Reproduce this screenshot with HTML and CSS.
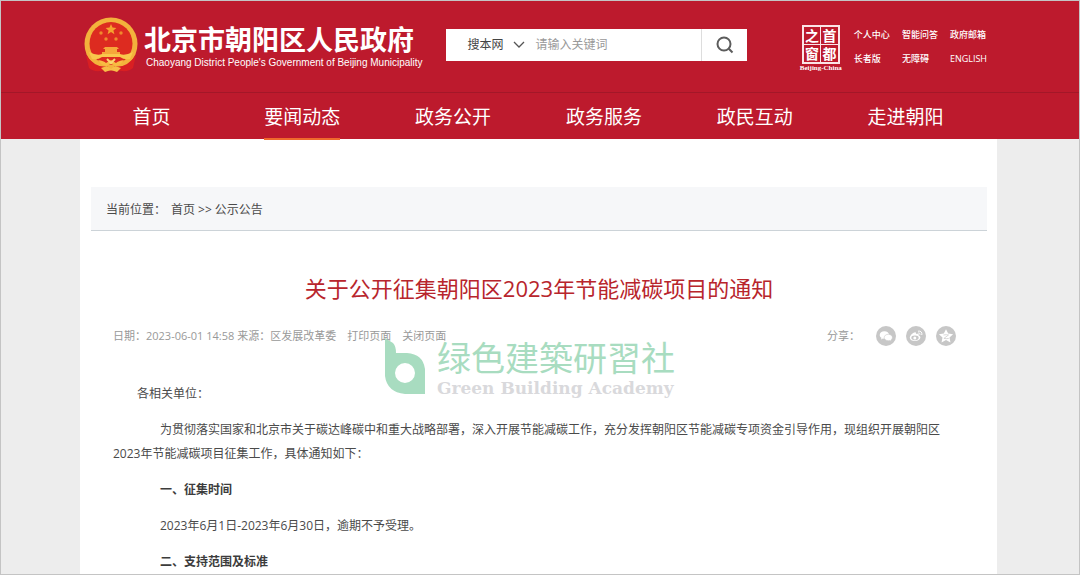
FILE: index.html
```html
<!DOCTYPE html>
<html lang="zh-CN">
<head>
<meta charset="utf-8">
<meta name="viewport" content="width=device-width, initial-scale=1">
<title>北京市朝阳区人民政府</title>
<link rel="stylesheet" href="styles.css">
</head>
<body>
<div class="page">
  <header class="header">
    <div class="masthead">
      <a class="brand" href="#">
        <svg class="emblem" viewBox="0 0 54 56" aria-hidden="true">
          <path d="M8 38 L6 50 Q11 54 17 53 L27 49 L37 53 Q43 54 48 50 L46 38Z" fill="#dc2020"/>
          <circle cx="27" cy="27" r="26.500" fill="#f3b23c"/>
          <circle cx="27" cy="26.500" r="21.500" fill="#dd2b20"/>
          <path d="M27 7l1.500 3.600 3.900.3-3 2.500 1 3.800-3.400-2.100-3.400 2.100 1-3.800-3-2.500 3.900-.3z" fill="#f5a32f"/>
          <g fill="#f08a2c"><circle cx="17" cy="16" r="1.700"/><circle cx="37" cy="16" r="1.700"/><circle cx="22" cy="22" r="1.700"/><circle cx="32" cy="22" r="1.700"/></g>
          <path d="M21 30h12l2 2h-2v3h3v2H18v-2h3v-3h-2z" fill="#f6a73a"/>
          <path d="M5 35q8 4 13 2h18q5 2 13-2l-3 7q-6 1-10-2H18q-4 3-10 2z" fill="#f9c74c"/>
          <path d="M2 38 Q12 52 24 49 L22 53 Q10 56 5 51Z M52 38 Q42 52 30 49 L32 53 Q44 56 49 51Z" fill="#d91f22"/>
          <path d="M14 43q6 1 8 3l5-3 5 3q2-2 8-3-3 5-8 6l-5-2-5 2q-5-1-8-6z" fill="#f8bb43"/>
          <path d="M17 51l6-2 4 3 4-3 6 2-4 4-6-2-6 2z" fill="#f7bd48"/>
          <path d="M23 42l4 4 4-4" fill="none" stroke="#fbd770" stroke-width="2"/>
        </svg>
        <span class="brand-text">
          <span class="brand-name">北京市朝阳区人民政府</span>
          <span class="brand-en">Chaoyang District People's Government of Beijing Municipality</span>
        </span>
      </a>
      <form class="search">
        <select class="search-scope" aria-label="搜索范围"><option>搜本网</option></select>
        <input class="search-input" type="text" placeholder="请输入关键词" aria-label="关键词">
        <button class="search-button" type="button" aria-label="搜索">
          <svg viewBox="0 0 18 18" width="18" height="18" aria-hidden="true"><circle cx="8" cy="8" r="6.500"/><path d="M12.800 12.800L16.500 16.500"/></svg>
        </button>
      </form>
      <div class="tools">
        <a class="capital" href="#">
          <span class="seal"><span>之</span><span>首</span><span>窗</span><span>都</span></span>
          <span class="seal-en">Beijing-China</span>
        </a>
        <div class="quick">
          <a href="#">个人中心</a><a href="#">智能问答</a><a href="#">政府邮箱</a>
          <a href="#">长者版</a><a href="#">无障碍</a><a href="#">ENGLISH</a>
        </div>
      </div>
    </div>
    <nav class="nav">
      <a href="#">首页</a>
      <a class="active" href="#">要闻动态</a>
      <a href="#">政务公开</a>
      <a href="#">政务服务</a>
      <a href="#">政民互动</a>
      <a href="#">走进朝阳</a>
    </nav>
  </header>
  <main class="sheet">
    <div class="crumbs"><span>当前位置：</span><a href="#">首页</a><span class="sep">&gt;&gt;</span><a href="#">公示公告</a></div>
    <article class="article">
      <h1 class="title">关于公开征集朝阳区2023年节能减碳项目的通知</h1>
      <div class="meta">
        <div class="meta-info"><span>日期：2023-06-01 14:58 来源：区发展改革委</span><a href="#">打印页面</a><a href="#">关闭页面</a></div>
        <div class="share">
          <span class="share-label">分享：</span>
          <a href="#" aria-label="微信"><svg viewBox="0 0 20 20"><circle cx="10" cy="10" r="10" fill="#c7c7c7"/><path d="M8.400 5.200c-2.700 0-4.700 1.600-4.700 3.700 0 1.200.7 2.200 1.700 2.900l-.3 1.600 1.800-.9 1.500.2c2.600 0 4.700-1.700 4.700-3.800S11 5.200 8.400 5.200z" fill="#fff"/><path d="M12.300 8.300c2.300 0 4.100 1.400 4.100 3.200 0 1-.6 1.900-1.500 2.500l.3 1.300-1.600-.8-1.300.2c-2.300 0-4.100-1.400-4.100-3.200s1.800-3.200 4.100-3.200z" fill="#fff" stroke="#c7c7c7" stroke-width=".6"/></svg></a>
          <a href="#" aria-label="微博"><svg viewBox="0 0 20 20"><circle cx="10" cy="10" r="10" fill="#c7c7c7"/><path d="M8.500 6.400c1.200-.3 1.800.4 1.400 1.700 1.800-.7 3.200-.3 2.800 1.300 1.100.3 1.800 1.100 1.700 2.200-.2 2-2.500 3.500-5.400 3.500-3 0-5.200-1.300-5.200-3.300 0-2.200 2.400-4.800 4.700-5.400z" fill="#fff"/><ellipse cx="9" cy="11.800" rx="3.700" ry="2.400" fill="#c7c7c7"/><circle cx="8.800" cy="12" r="1.500" fill="#fff"/><path d="M12 5.200c2.600-.7 4.500 1.300 3.800 3.800M12.200 7c1.300-.3 2.100.6 1.800 1.700" fill="none" stroke="#fff"/></svg></a>
          <a href="#" aria-label="QQ空间"><svg viewBox="0 0 20 20"><circle cx="10" cy="10" r="10" fill="#c7c7c7"/><path d="M10 3.200l2.200 4.400 4.900.6-3.600 3.400 1 4.900-4.500-2.400-4.500 2.400 1-4.900-3.600-3.400 4.900-.6z" fill="#fff"/><path d="M7.500 9q3-.6 5 0l-4.600 3.400q2.500.6 4.900 0" fill="none" stroke="#c7c7c7" stroke-width=".7"/></svg></a>
        </div>
        <div class="watermark">
          <svg viewBox="0 0 40 56" aria-hidden="true"><path fill-rule="evenodd" d="M0 0L8 5Q11 8 11 15H22Q38 16 40 31V56H20Q2 54 0 38ZM20 25a10 10 0 1 0 0 20a10 10 0 1 0 0-20Z"/></svg>
          <div class="watermark-text">
            <span class="watermark-cn">绿色建築研習社</span>
            <span class="watermark-en">Green Building Academy</span>
          </div>
        </div>
      </div>
      <div class="content">
        <p class="salute">各相关单位：</p>
        <p>为贯彻落实国家和北京市关于碳达峰碳中和重大战略部署，深入开展节能减碳工作，充分发挥朝阳区节能减碳专项资金引导作用，现组织开展朝阳区2023年节能减碳项目征集工作，具体通知如下：</p>
        <h2>一、征集时间</h2>
        <p>2023年6月1日-2023年6月30日，逾期不予受理。</p>
        <h2>二、支持范围及标准</h2>
      </div>
    </article>
  </main>
</div>
</body>
</html>
```
FILE: styles.css
```css
* { box-sizing: border-box; }

body {
  margin: 0;
  background: #ededed;
  color: #4a4a4a;
  font-family: "Open Sans", "Noto Sans CJK SC", sans-serif;
  font-size: 12px;
}

a { color: inherit; text-decoration: none; }

.page {
  display: flex;
  flex-direction: column;
  min-height: 100vh;
  border: 1px solid #c4c4c4;
}

/* Header */
.header { background: #bd1a2d; color: #fff; }

.masthead {
  display: flex;
  align-items: center;
  height: 91px;
  padding: 0 92px 4px 83px;
}

.brand { display: flex; align-items: center; gap: 6px; }
.emblem { width: 54px; height: 56px; }
.brand-text { display: flex; flex-direction: column; padding-top: 5px; }
.brand-name { font-size: 27px; font-weight: 700; line-height: 32px; white-space: nowrap; }
.brand-en {
  padding-left: 2px;
  font-family: "Liberation Sans", sans-serif;
  font-size: 10px;
  line-height: 14px;
  white-space: nowrap;
}

.search {
  display: flex;
  flex: 0 1 301px;
  height: 32px;
  margin-left: 24px;
  background: #fff;
}

.search-scope,
.search-input,
.search-button {
  border: 0;
  padding: 0;
  background: transparent;
  font: inherit;
  border-radius: 0;
}

.search-scope {
  appearance: none;
  width: 80px;
  padding-left: 21px;
  color: #444;
  background: url("data:image/svg+xml,%3Csvg xmlns='http://www.w3.org/2000/svg' width='12' height='8' fill='none' stroke='%23555' stroke-width='1.3'%3E%3Cpath d='M1 1l5 5 5-5'/%3E%3C/svg%3E") no-repeat right 1px center;
}

.search-input { flex: 1; min-width: 0; padding-left: 9px; }
.search-input::placeholder { color: #999; }

.search-button {
  display: grid;
  place-items: center;
  width: 46px;
  border-left: 1px solid #ddd;
}
.search-button svg { fill: none; stroke: #5c5c5c; stroke-width: 2; }

.tools { display: flex; align-items: center; gap: 12px; margin-left: auto; padding-top: 8px; }
.capital { display: flex; flex-direction: column; align-items: center; }

.seal {
  display: grid;
  grid-template-columns: 1fr 1fr;
  width: 38px;
  border: 2px solid #fbe4e6;
  background: #fbe4e6;
  gap: 1px;
}
.seal span {
  background: #bd1a2d;
  font-size: 14px;
  font-weight: 700;
  line-height: 17px;
  text-align: center;
}
.seal-en { font: 700 7px/8px "Liberation Serif", serif; }

.quick {
  display: grid;
  grid-template-columns: repeat(3, auto);
  gap: 8px 12px;
  padding-bottom: 4px;
  font-size: 9px;
  font-weight: 500;
  line-height: 16px;
  white-space: nowrap;
}

.nav {
  display: grid;
  grid-template-columns: repeat(6, 1fr);
  grid-template-rows: 47px;
  justify-items: center;
  height: 47px;
  padding: 0 98px 0 75px;
  border-top: 1px solid #a31728;
  font-size: 19px;
  line-height: 48px;
}
.nav .active { position: relative; box-shadow: inset 0 -2px #ef6a2c; }

/* Content sheet */
.sheet { flex: 1; margin: 0 82px 0 79px; padding: 48px 10px 0 11px; background: #fff; }

.crumbs {
  display: flex;
  height: 44px;
  padding-left: 15px;
  border-bottom: 1px solid #ccd3d8;
  background: #f6f7f9;
  line-height: 45px;
}
.crumbs a:first-of-type { margin-left: 5px; }
.sep { padding: 0 3px; }

.article { padding: 41px 22px 0; }

.title {
  margin: 0;
  color: #b8252c;
  font-size: 22px;
  font-weight: 400;
  line-height: 32px;
  text-align: center;
}

.meta {
  position: relative;
  display: flex;
  justify-content: space-between;
  align-items: center;
  margin-top: 20px;
  padding-right: 9px;
  color: #999;
  font-size: 11px;
  line-height: 24px;
}
.meta-info { display: flex; gap: 11px; }
.share { display: flex; align-items: center; gap: 10px; }
.share-label { padding-right: 6px; }
.share svg { display: block; width: 20px; height: 20px; }

.watermark {
  position: absolute;
  top: 14px;
  left: 272px;
  display: flex;
  align-items: flex-start;
  gap: 12px;
  pointer-events: none;
}
.watermark > svg { width: 40px; height: 56px; fill: #a8dcc0; }
.watermark-text { display: flex; flex-direction: column; white-space: nowrap; }
.watermark-cn { color: #a8dcc0; font-size: 34px; line-height: 40px; }
.watermark-en {
  color: #d9d9dc;
  font-family: "DejaVu Serif", serif;
  font-size: 17px;
  font-weight: 700;
  line-height: 20px;
}

.content { padding-top: 34px; line-height: 24px; }
.content p,
.content h2 { margin: 0 0 12px; font-size: 12px; text-indent: 47px; }
.content h2 { font-weight: 700; color: #3c3c3c; }
.content .salute { text-indent: 24px; }
.content > :last-child { margin-bottom: 0; }
```
